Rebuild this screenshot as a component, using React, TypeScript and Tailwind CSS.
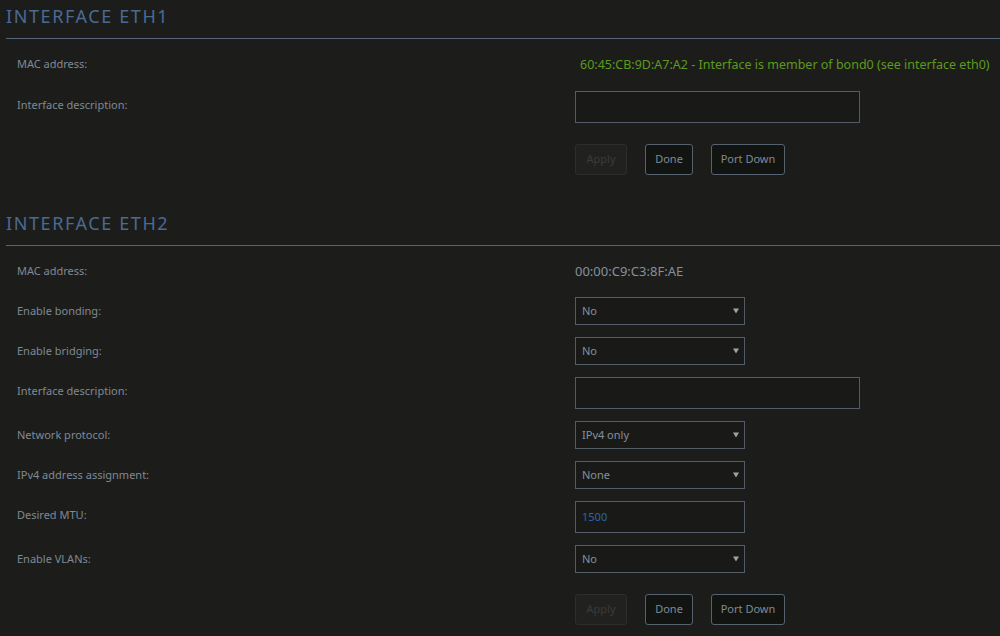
import React from 'react';

type Row =
    | { kind: 'text'; label: string; value: string; tone?: 'green' | 'gray' }
    | { kind: 'select'; label: string; value: string }
    | { kind: 'input'; label: string; value?: string; wide?: boolean };

const eth1: Row[] = [
    {
        kind: 'text',
        label: 'MAC address:',
        value: '60:45:CB:9D:A7:A2 - Interface is member of bond0 (see interface eth0)',
        tone: 'green',
    },
    { kind: 'input', label: 'Interface description:', wide: true },
];

const eth2: Row[] = [
    { kind: 'text', label: 'MAC address:', value: '00:00:C9:C3:8F:AE' },
    { kind: 'select', label: 'Enable bonding:', value: 'No' },
    { kind: 'select', label: 'Enable bridging:', value: 'No' },
    { kind: 'input', label: 'Interface description:', wide: true },
    { kind: 'select', label: 'Network protocol:', value: 'IPv4 only' },
    { kind: 'select', label: 'IPv4 address assignment:', value: 'None' },
    { kind: 'input', label: 'Desired MTU:', value: '1500' },
    { kind: 'select', label: 'Enable VLANs:', value: 'No' },
];

function Field({ row }: { row: Row }) {
    if (row.kind === 'text') {
        return (
            <div
                className={
                    row.tone === 'green'
                        ? 'pl-[5px] text-[12.5px] leading-[29px] text-[#5c9a1c]'
                        : 'text-[13px] leading-[28px] text-[#87909a]'
                }
            >
                {row.value}
            </div>
        );
    }
    if (row.kind === 'select') {
        return (
            <div className="flex h-[28px] w-[170px] items-center justify-between border border-[#535c66] bg-[#191a18] pl-[6px] pr-[5px] text-[11px] text-[#86909a]">
                <span>{row.value}</span>
                {/* dropdown arrow */}
                <svg width="6" height="6" viewBox="0 0 6 6">
                    <path d="M0 0.5 L6 0.5 L3 5.5 Z" fill="#9aa4ae" />
                </svg>
            </div>
        );
    }
    return (
        <div
            className={
                (row.wide ? 'w-[285px] ' : 'w-[170px] ') +
                'flex h-[32px] items-center border border-[#535c66] bg-[#191a18] pl-[6px] text-[11px] text-[#2a66aa]'
            }
        >
            {row.value}
        </div>
    );
}

function Buttons() {
    return (
        <div className="mt-[21px] grid grid-cols-[558px_1fr]">
            <div />
            <div className="flex gap-[18px] pl-[11px] text-[11px]">
                <div className="flex h-[31px] w-[52px] items-center justify-center rounded-[3px] border border-[#2c2e2d] bg-[#212220] text-[#393c3d]">
                    Apply
                </div>
                <div className="flex h-[31px] w-[48px] items-center justify-center rounded-[3px] border border-[#56636f] bg-[#121412] text-[#808a94]">
                    Done
                </div>
                <div className="flex h-[31px] w-[74px] items-center justify-center rounded-[3px] border border-[#56636f] bg-[#121412] text-[#808a94]">
                    Port Down
                </div>
            </div>
        </div>
    );
}

function Section({ title, rows }: { title: string; rows: Row[] }) {
    return (
        <section className="mb-[32px]">
            <h2 className="border-b border-[#55657a] pt-[4px] pb-[10px] text-[18px] leading-[24px] tracking-[1.6px] text-[#4a6a90]">
                {title}
            </h2>
            <div className="flex flex-col gap-[12px] pt-[11px]">
                {rows.map((row, i) => (
                    <div key={i} className="grid grid-cols-[569px_1fr]">
                        <div className="pl-[11px] text-[11px] leading-[28px] text-[#7f8994]">{row.label}</div>
                        <div>
                            <Field row={row} />
                        </div>
                    </div>
                ))}
            </div>
            <Buttons />
        </section>
    );
}

export default function App() {
    return (
        <div
            className="min-h-[636px] w-[1000px] overflow-hidden bg-[#1c1d1b] pl-[6px]"
            style={{ fontFamily: '"Noto Sans", "Open Sans", sans-serif' }}
        >
            <Section title="INTERFACE ETH1" rows={eth1} />
            <Section title="INTERFACE ETH2" rows={eth2} />
        </div>
    );
}
